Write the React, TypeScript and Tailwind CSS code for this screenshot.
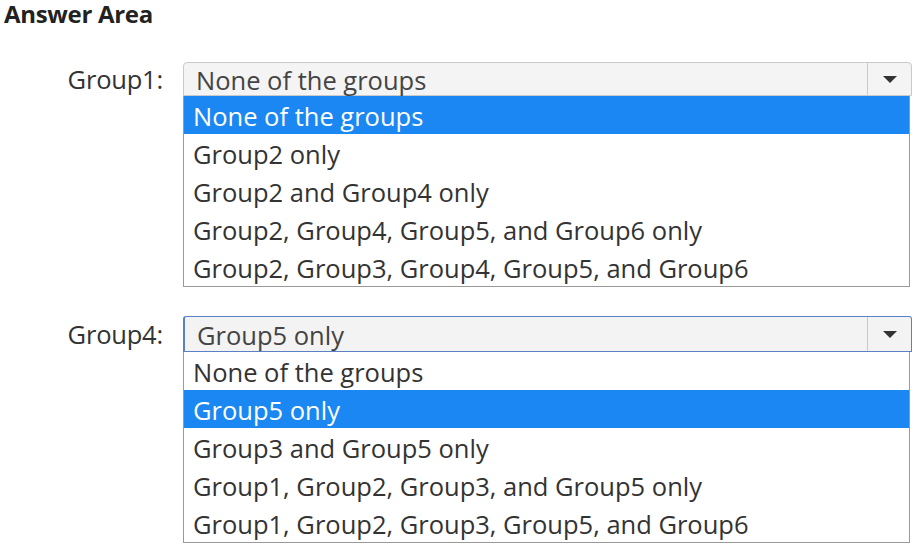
import React from "react";

const font = { fontFamily: '"Open Sans", "Noto Sans", sans-serif' };

function Caret() {
  return (
    <svg width="16" height="9" viewBox="0 0 16 9">
      <path d="M1 1 L15 1 L8 8 Z" fill="#333333" />
    </svg>
  );
}

function Dropdown({
  label,
  value,
  options,
  selected,
  focused,
}: {
  label: string;
  value: string;
  options: string[];
  selected: number;
  focused?: boolean;
}) {
  return (
    <div className="flex items-start">
      <div
        className={
          focused
            ? "w-[163px] h-[36px] flex items-center justify-end text-[25.5px] text-[#333] tracking-[-0.2px]"
            : "w-[163px] h-[34px] flex items-center justify-end text-[25.5px] text-[#333] tracking-[-0.2px]"
        }
      >
        {label}
      </div>
      <div className="ml-[20px] w-[729px] flex flex-col">
        <div
          className={
            focused
              ? "h-[36px] flex items-stretch rounded-t-[3px] border border-l-2 border-[#5b80c5] bg-[#f4f3f3]"
              : "h-[34px] flex items-stretch rounded-t-[4px] border border-[#c9c9c9] bg-[#f4f4f4]"
          }
        >
          <div className="flex-1 flex items-center pl-[12px] text-[25.5px] text-[#444] leading-none pt-[3px] whitespace-nowrap">
            {value}
          </div>
          <div className="w-[44px] border-l border-[#c9c9c9] flex items-center justify-center">
            <Caret />
          </div>
        </div>
        <div className="w-[727px] border border-[#9a9a9a] border-t-0 bg-white flex flex-col">
          {options.map((o, i) => (
            <div
              key={o}
              className={
                i === selected
                  ? "h-[38px] flex items-center pl-[9px] pt-[3px] text-[25.5px] leading-none whitespace-nowrap bg-[#1a87f3] text-white"
                  : "h-[38px] flex items-center pl-[9px] pt-[3px] text-[25.5px] leading-none whitespace-nowrap text-[#333]"
              }
            >
              {o}
            </div>
          ))}
        </div>
      </div>
    </div>
  );
}

export default function App() {
  return (
    <div className="w-[917px] h-[548px] bg-white" style={font}>
      <div className="pl-[4px] text-[24px] leading-[27px] font-bold text-[#222] tracking-[-0.3px] whitespace-nowrap">
        Answer Area
      </div>
      <div className="mt-[35px]">
        <Dropdown
          label="Group1:"
          value="None of the groups"
          selected={0}
          options={[
            "None of the groups",
            "Group2 only",
            "Group2 and Group4 only",
            "Group2, Group4, Group5, and Group6 only",
            "Group2, Group3, Group4, Group5, and Group6",
          ]}
        />
      </div>
      <div className="mt-[29px]">
        <Dropdown
          label="Group4:"
          value="Group5 only"
          selected={1}
          focused
          options={[
            "None of the groups",
            "Group5 only",
            "Group3 and Group5 only",
            "Group1, Group2, Group3, and Group5 only",
            "Group1, Group2, Group3, Group5, and Group6",
          ]}
        />
      </div>
    </div>
  );
}
